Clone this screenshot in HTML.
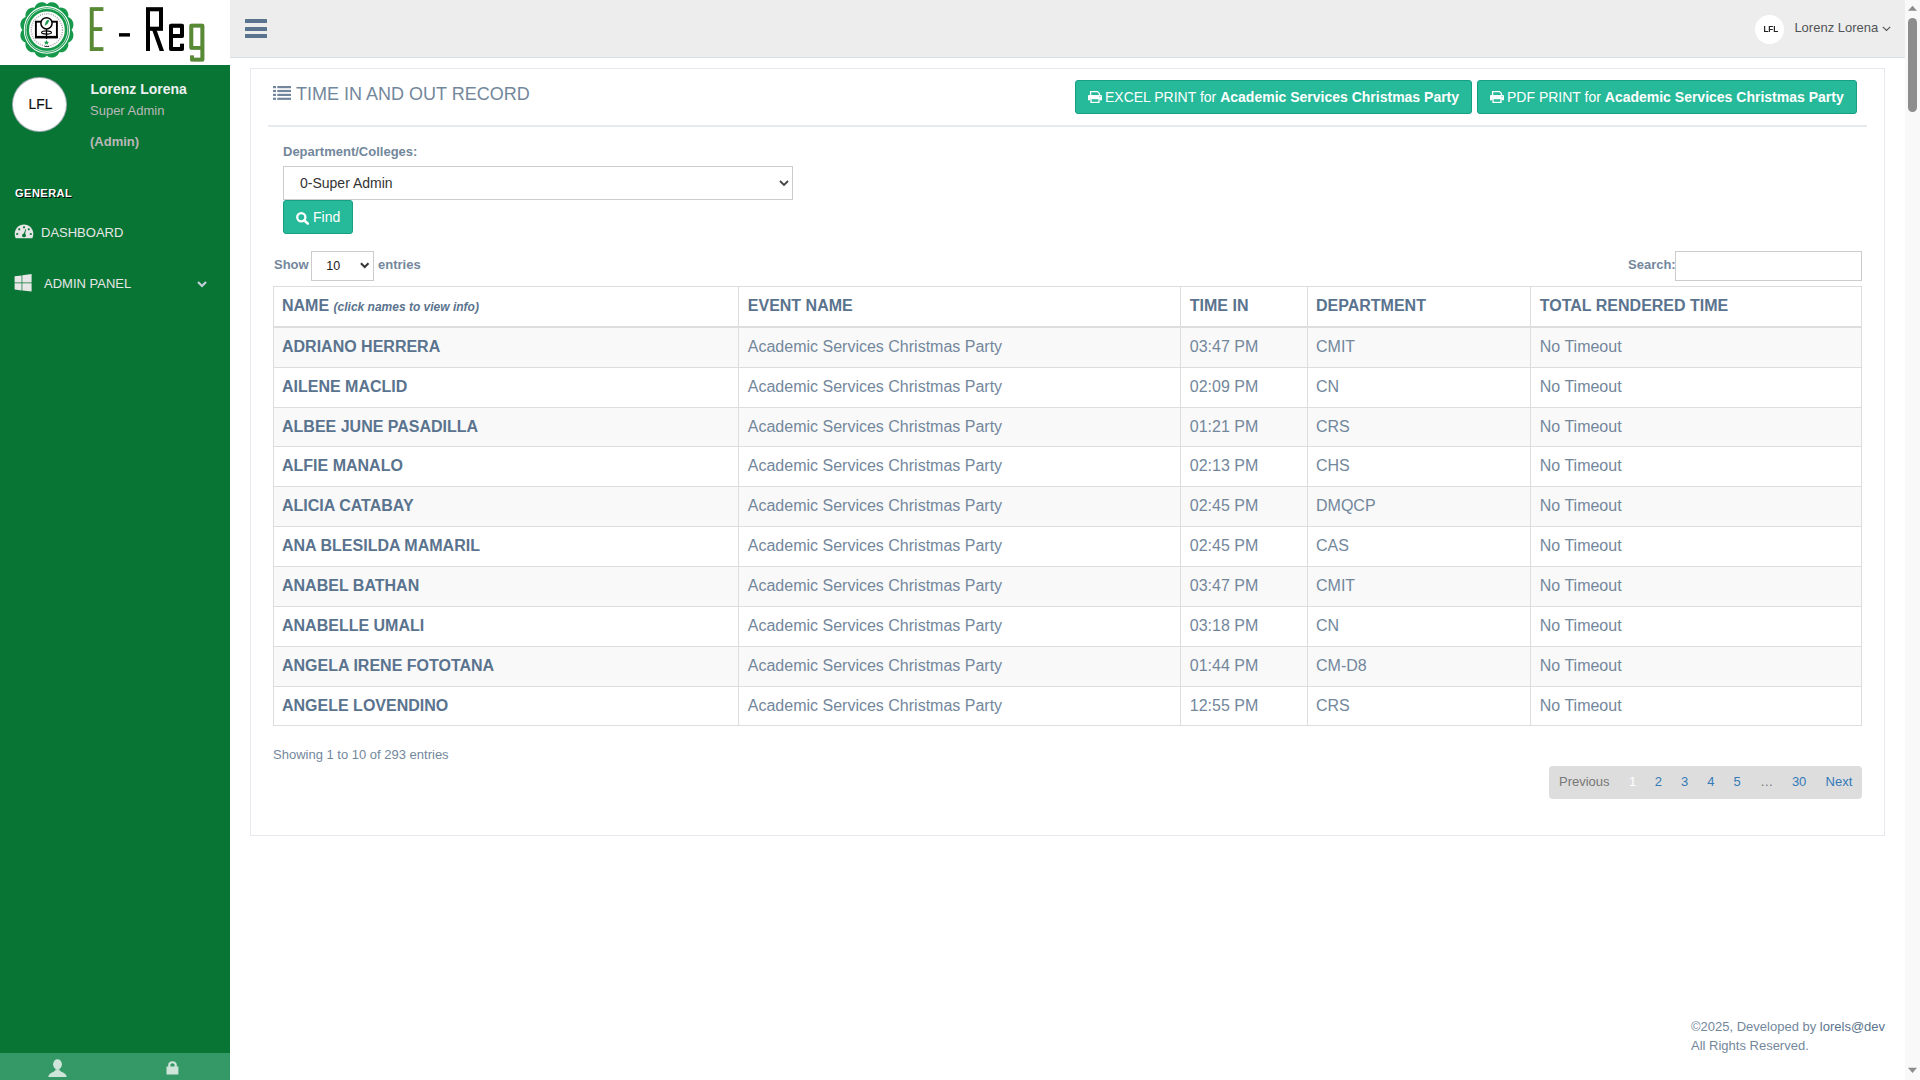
<!DOCTYPE html>
<html>
<head>
<meta charset="utf-8">
<style>
*{box-sizing:border-box;margin:0;padding:0}
html,body{width:1920px;height:1080px;overflow:hidden;background:#fff}
body{font-family:"Liberation Sans",sans-serif;font-size:13px;color:#73879C;line-height:1;position:relative}
.t{position:absolute;white-space:nowrap;line-height:1}
svg{position:absolute;overflow:visible}
/* sidebar */
#side{position:absolute;left:0;top:0;width:230px;height:1080px;background:#087535}
#logo{position:absolute;left:0;top:0;width:230px;height:65px;background:#fff}
#sfoot{position:absolute;left:0;top:1053px;width:230px;height:27px;background:#359967}
/* top nav */
#nav{position:absolute;left:230px;top:0;width:1675px;height:58px;background:#EDEDED;border-bottom:1px solid #D9DEE4}
/* scrollbar */
#sb{position:absolute;left:1905px;top:0;width:15px;height:1080px;background:#F9F9F9}
#thumb{position:absolute;left:1908px;top:18px;width:9px;height:94px;background:#8D8D8D;border-radius:5px}
/* panel */
#panel{position:absolute;left:250px;top:68px;width:1635px;height:768px;border:1px solid #E6E9ED;background:#fff}
#ttl-line{position:absolute;left:268px;top:125px;width:1599px;height:2px;background:#E6E9ED}
.btn{position:absolute;height:34px;background:#26B99A;border:1px solid #169F85;border-radius:3px;color:#fff;font-size:14px;line-height:32px;white-space:nowrap}
.btn b{font-weight:700}
table{position:absolute;left:273px;top:286px;width:1588px;border-collapse:collapse;font-size:16px;line-height:22.857px;table-layout:fixed}
td,th{border:1px solid #ddd;padding:8px;text-align:left;vertical-align:top;white-space:nowrap}
th{font-weight:700;color:#5A738E;border-bottom-width:2px;line-height:22.857px}
tbody tr:nth-child(odd){background:#F9F9F9}
td.n{font-weight:700;color:#5A738E}
td:nth-child(2),th:nth-child(2),td:nth-child(3),th:nth-child(3),td:nth-child(5),th:nth-child(5){padding-left:8.8px}
.sel{position:absolute;background:#fff;border:1px solid #ccc}
.pg{position:absolute;top:774.5px;font-size:13px;color:#337AB7}
</style>
</head>
<body>
<div id="side">
  <div id="logo"></div>
  <div id="sfoot"></div>
</div>

<!-- logo -->
<svg style="left:0;top:0" width="230" height="65" viewBox="0 0 230 65">
  <g transform="translate(46.9,29.9)">
    <path fill="#17994C" d="M0.00,-25.71L1.34,-26.73L2.75,-27.33L4.19,-27.66L5.63,-27.70L7.04,-27.46L8.37,-26.93L9.60,-26.14L10.70,-25.11L11.63,-23.85L12.30,-22.26L13.95,-22.45L15.46,-22.23L16.86,-21.76L18.13,-21.04L19.23,-20.10L20.14,-18.95L20.82,-17.62L21.28,-16.15L21.48,-14.58L21.30,-12.85L22.82,-12.15L24.03,-11.18L25.01,-10.03L25.77,-8.75L26.27,-7.36L26.51,-5.89L26.46,-4.38L26.16,-2.87L25.58,-1.40L24.60,-0.00L25.58,1.40L26.16,2.87L26.46,4.38L26.51,5.89L26.27,7.36L25.77,8.75L25.01,10.03L24.03,11.18L22.82,12.15L21.30,12.85L21.48,14.58L21.28,16.15L20.82,17.62L20.14,18.95L19.23,20.10L18.13,21.04L16.86,21.76L15.46,22.23L13.95,22.45L12.30,22.26L11.63,23.85L10.70,25.11L9.60,26.14L8.37,26.93L7.04,27.46L5.63,27.70L4.19,27.66L2.75,27.33L1.34,26.73L0.00,25.71L-1.34,26.73L-2.75,27.33L-4.19,27.66L-5.63,27.70L-7.04,27.46L-8.37,26.93L-9.60,26.14L-10.70,25.11L-11.63,23.85L-12.30,22.26L-13.95,22.45L-15.46,22.23L-16.86,21.76L-18.13,21.04L-19.23,20.10L-20.14,18.95L-20.82,17.62L-21.28,16.15L-21.48,14.58L-21.30,12.85L-22.82,12.15L-24.03,11.18L-25.01,10.03L-25.77,8.75L-26.27,7.36L-26.51,5.89L-26.46,4.38L-26.16,2.87L-25.58,1.40L-24.60,0.00L-25.58,-1.40L-26.16,-2.87L-26.46,-4.38L-26.51,-5.89L-26.27,-7.36L-25.77,-8.75L-25.01,-10.03L-24.03,-11.18L-22.82,-12.15L-21.30,-12.85L-21.48,-14.58L-21.28,-16.15L-20.82,-17.62L-20.14,-18.95L-19.23,-20.10L-18.13,-21.04L-16.86,-21.76L-15.46,-22.23L-13.95,-22.45L-12.30,-22.26L-11.63,-23.85L-10.70,-25.11L-9.60,-26.14L-8.37,-26.93L-7.04,-27.46L-5.63,-27.70L-4.19,-27.66L-2.75,-27.33L-1.34,-26.73L-0.00,-25.71Z"/>
    <g transform="scale(1,1.03)">
    <circle r="22.6" fill="none" stroke="#fff" stroke-width="1"/>
    <circle r="20.9" fill="none" stroke="#fff" stroke-width="0.7"/>
    <circle r="17.9" fill="#fff"/>
    <circle r="15.6" fill="none" stroke="#555" stroke-width="1.5" stroke-dasharray="0.9 1.3" opacity="0.55"/>
    </g>
    <rect x="-11" y="-8.2" width="21" height="15.8" fill="none" stroke="#000" stroke-width="1.9"/>
    <rect x="-11.9" y="6" width="22.8" height="2" fill="#000"/>
    <circle cx="-0.4" cy="-6.6" r="5.6" fill="#fff" stroke="#000" stroke-width="1.5"/>
    <path d="M-2.2,-4.2 Q-1,-11 2.3,-9.6 Q1.6,-6 -2.2,-4.2Z" fill="#17994C"/>
    <ellipse cx="-0.4" cy="2.6" rx="5" ry="1.6" fill="none" stroke="#000" stroke-width="1.1"/>
    <path d="M-0.4,-1 V9" stroke="#000" stroke-width="1.3"/>
    <path d="M-0.4,10.2 l0.8,1.7 1.8,0.1 -1.4,1.1 0.5,1.8 -1.7,-1 -1.7,1 0.5,-1.8 -1.4,-1.1 1.8,-0.1z" fill="#17994C"/>
    <rect x="-2.3" y="16.1" width="4.6" height="0.9" fill="#333"/>
  </g>
  <g style="filter:drop-shadow(0.8px 0.8px 0.6px rgba(0,0,0,0.35))">
    <path d="M103.3,9.1H91.7V49.2H103.3M91.7,29.1H102.2" fill="none" stroke="#578A32" stroke-width="3.7" stroke-linejoin="miter"/>
    <rect x="119" y="33.2" width="11" height="3.3" fill="#000"/>
    <path d="M148,51V9.3H161V28.8H149" fill="none" stroke="#000" stroke-width="4" stroke-linejoin="miter"/>
    <path d="M151.5,28 L155.8,28 L164,51 L159.7,51Z" fill="#000"/>
    <path d="M171,36.1H182V25.7H171V49H182V43.8" fill="none" stroke="#000" stroke-width="4" stroke-linejoin="round"/>
    <path d="M202.4,47.8H191.3V25.6H202.4V59.7H192V55.4" fill="none" stroke="#578A32" stroke-width="3.8" stroke-linejoin="round"/>
  </g>
</svg>

<!-- profile -->
<div style="position:absolute;left:12px;top:77px;width:55px;height:55px;border-radius:50%;background:#fff;border:1px solid rgba(52,73,94,0.44)"></div>
<div class="t" style="left:28.6px;top:97.6px;font-size:13.8px;color:#111;-webkit-text-stroke:0.2px #111">LFL</div>
<div class="t" style="left:90.4px;top:81.9px;font-size:14px;font-weight:700;color:#ECF0F1">Lorenz Lorena</div>
<div class="t" style="left:90px;top:104.1px;font-size:13px;color:#BAB8B8">Super Admin</div>
<div class="t" style="left:90px;top:134.5px;font-size:13px;font-weight:700;color:#BAB8B8">(Admin)</div>

<!-- menu -->
<div class="t" style="left:15px;top:187.7px;font-size:11px;font-weight:700;color:#fff;letter-spacing:.5px;text-shadow:1px 1px #000">GENERAL</div>
<svg style="left:14px;top:224px" width="20" height="15" viewBox="0 0 20 15">
  <path d="M10,0.5C4.9,0.5 0.7,4.7 0.7,9.9C0.7,11.5 1.1,12.9 1.7,14.3H18.3C18.9,12.9 19.3,11.5 19.3,9.9C19.3,4.7 15.1,0.5 10,0.5Z" fill="#E7E7E7"/>
  <g fill="#087535">
    <circle cx="10" cy="3.3" r="1.1"/><circle cx="5.2" cy="5.3" r="1.1"/><circle cx="14.8" cy="5.3" r="1.1"/>
    <circle cx="3.2" cy="10" r="1.1"/><circle cx="16.8" cy="10" r="1.1"/>
    <circle cx="10" cy="11.4" r="1.9"/>
    <path d="M9.3,11 L11.6,5 L12.2,5.2 L10.7,11.6Z"/>
  </g>
</svg>
<div class="t" style="left:41px;top:226px;font-size:13px;color:#E7E7E7">DASHBOARD</div>
<svg style="left:14px;top:274px" width="18" height="18" viewBox="0 0 18 18">
  <path d="M0.6,2.3 L7.6,1.4 V8.6 H0.6Z M8.3,1.3 L17.6,0 V8.6 H8.3Z M0.6,9.3 H7.6 V16.4 L0.6,15.5Z M8.3,9.3 H17.6 V17.5 L8.3,16.5Z" fill="#E7E7E7"/>
</svg>
<div class="t" style="left:44px;top:276.7px;font-size:13px;color:#E7E7E7">ADMIN PANEL</div>
<svg style="left:197px;top:280.5px" width="10" height="7" viewBox="0 0 10 7">
  <path d="M1,1 L5,5 L9,1" fill="none" stroke="#C4CFDA" stroke-width="2.2"/>
</svg>

<!-- sidebar footer icons -->
<svg style="left:48px;top:1059px" width="19" height="18" viewBox="0 0 19 18">
  <ellipse cx="9.5" cy="5.3" rx="4.4" ry="5.1" fill="#D0E5DA"/>
  <path d="M0.3,18 C0.7,15.2 2.2,14.1 5,12.9 C6.6,12.2 7.4,11.6 7.6,10.2 H11.4 C11.6,11.6 12.4,12.2 14,12.9 C16.8,14.1 18.3,15.2 18.7,18Z" fill="#D0E5DA"/>
</svg>
<svg style="left:166px;top:1061px" width="13" height="15" viewBox="0 0 13 15">
  <path d="M2.2,5.5V3.9C2.2,1.7 4.1,0.3 6.5,0.3C8.9,0.3 10.8,1.7 10.8,3.9V5.5H8.6V4.2C8.6,3 7.7,2.3 6.5,2.3C5.3,2.3 4.4,3 4.4,4.2V5.5Z M0.5,5.5H12.4V13.6H0.5Z" fill="#D0E5DA"/>
</svg>

<!-- top nav -->
<div id="nav"></div>
<svg style="left:245px;top:19px" width="22" height="19" viewBox="0 0 22 19">
  <rect x="0" y="0" width="22" height="4" rx="0.6" fill="#5A738E"/>
  <rect x="0" y="8" width="22" height="4" rx="0.6" fill="#5A738E"/>
  <rect x="0" y="15" width="22" height="4" rx="0.6" fill="#5A738E"/>
</svg>
<div style="position:absolute;left:1755px;top:15px;width:29px;height:29px;border-radius:50%;background:#fff"></div>
<div class="t" style="left:1762.5px;top:25.4px;font-size:8.5px;font-weight:700;color:#222;transform:scaleX(0.95)">LFL</div>
<div class="t" style="left:1794.4px;top:21.1px;font-size:13px;color:#515356">Lorenz Lorena</div>
<svg style="left:1881.5px;top:26px" width="9" height="6" viewBox="0 0 9 6">
  <path d="M0.8,0.8 L4.5,4.5 L8.2,0.8" fill="none" stroke="#515356" stroke-width="1.1"/>
</svg>

<!-- panel -->
<div id="panel"></div>
<svg style="left:273px;top:86px" width="18" height="14" viewBox="0 0 18 14">
  <g fill="#73879C">
    <rect x="0" y="0" width="3" height="2.2"/><rect x="4.3" y="0" width="13.7" height="2.2"/>
    <rect x="0" y="3.9" width="3" height="2.2"/><rect x="4.3" y="3.9" width="13.7" height="2.2"/>
    <rect x="0" y="7.8" width="3" height="2.2"/><rect x="4.3" y="7.8" width="13.7" height="2.2"/>
    <rect x="0" y="11.7" width="3" height="2.2"/><rect x="4.3" y="11.7" width="13.7" height="2.2"/>
  </g>
</svg>
<div class="t" style="left:296px;top:84.8px;font-size:18px;color:#73879C">TIME IN AND OUT RECORD</div>
<div id="ttl-line"></div>

<div class="btn" style="left:1075px;top:80px;width:397px;padding-left:29px">EXCEL PRINT for <b>Academic Services Christmas Party</b></div>
<div class="btn" style="left:1477px;top:80px;width:380px;padding-left:29px">PDF PRINT for <b>Academic Services Christmas Party</b></div>
<svg style="left:1088px;top:91px" width="14" height="12" viewBox="0 0 14 12">
  <path d="M2.6,4.2V0.6H9.6L11.4,2.4V4.2" fill="none" stroke="#fff" stroke-width="1.3"/>
  <path d="M1.2,4H12.8C13.5,4 14,4.5 14,5.2V9.2H11.6V7.2H2.4V9.2H0V5.2C0,4.5 0.5,4 1.2,4Z" fill="#fff"/>
  <path d="M3,7.6H11V11.4H3Z" fill="none" stroke="#fff" stroke-width="1.3"/>
  <circle cx="12" cy="5.6" r="0.6" fill="#26B99A"/>
</svg>
<svg style="left:1490px;top:91px" width="14" height="12" viewBox="0 0 14 12">
  <path d="M2.6,4.2V0.6H9.6L11.4,2.4V4.2" fill="none" stroke="#fff" stroke-width="1.3"/>
  <path d="M1.2,4H12.8C13.5,4 14,4.5 14,5.2V9.2H11.6V7.2H2.4V9.2H0V5.2C0,4.5 0.5,4 1.2,4Z" fill="#fff"/>
  <path d="M3,7.6H11V11.4H3Z" fill="none" stroke="#fff" stroke-width="1.3"/>
  <circle cx="12" cy="5.6" r="0.6" fill="#26B99A"/>
</svg>

<div class="t" style="left:283px;top:145.2px;font-size:13px;font-weight:700;color:#73879C">Department/Colleges:</div>
<div class="sel" style="left:283px;top:166px;width:510px;height:34px"></div>
<div class="t" style="left:300px;top:176.4px;font-size:14px;color:#333">0-Super Admin</div>
<svg style="left:779px;top:180px" width="10" height="7" viewBox="0 0 10 7"><path d="M1,1 L5,5 L9,1" fill="none" stroke="#444" stroke-width="1.8"/></svg>
<div class="btn" style="left:283px;top:200px;width:70px;padding-left:29px;line-height:32px">Find</div>
<svg style="left:295.5px;top:212px" width="14" height="13" viewBox="0 0 14 13">
  <circle cx="5.3" cy="5.3" r="4.1" fill="none" stroke="#fff" stroke-width="2.3"/>
  <path d="M8.2,8.2 L11.8,11.6" stroke="#fff" stroke-width="2.6" stroke-linecap="round"/>
</svg>

<div class="t" style="left:274px;top:257.6px;font-size:13px;font-weight:700;color:#73879C">Show</div>
<div class="sel" style="left:311px;top:251px;width:63px;height:30px;border-color:#ccc"></div>
<div class="t" style="left:326.3px;top:260px;font-size:12.5px;color:#222">10</div>
<svg style="left:360px;top:262px" width="10" height="7" viewBox="0 0 10 7"><path d="M0.9,1.2 L4.7,5 L8.5,1.2" fill="none" stroke="#333" stroke-width="2"/></svg>
<div class="t" style="left:378px;top:257.6px;font-size:13px;font-weight:700;color:#73879C">entries</div>
<div class="t" style="left:1628px;top:257.6px;font-size:13px;font-weight:700;color:#73879C">Search:</div>
<div class="sel" style="left:1675px;top:251px;width:187px;height:30px"></div>

<table>
<colgroup><col style="width:465px"><col style="width:442px"><col style="width:127px"><col style="width:223px"><col style="width:331px"></colgroup>
<thead><tr><th>NAME <i style="font-size:12px;line-height:10px">(click names to view info)</i></th><th>EVENT NAME</th><th>TIME IN</th><th>DEPARTMENT</th><th>TOTAL RENDERED TIME</th></tr></thead>
<tbody>
<tr><td class="n">ADRIANO HERRERA</td><td>Academic Services Christmas Party</td><td>03:47 PM</td><td>CMIT</td><td>No Timeout</td></tr>
<tr><td class="n">AILENE MACLID</td><td>Academic Services Christmas Party</td><td>02:09 PM</td><td>CN</td><td>No Timeout</td></tr>
<tr><td class="n">ALBEE JUNE PASADILLA</td><td>Academic Services Christmas Party</td><td>01:21 PM</td><td>CRS</td><td>No Timeout</td></tr>
<tr><td class="n">ALFIE MANALO</td><td>Academic Services Christmas Party</td><td>02:13 PM</td><td>CHS</td><td>No Timeout</td></tr>
<tr><td class="n">ALICIA CATABAY</td><td>Academic Services Christmas Party</td><td>02:45 PM</td><td>DMQCP</td><td>No Timeout</td></tr>
<tr><td class="n">ANA BLESILDA MAMARIL</td><td>Academic Services Christmas Party</td><td>02:45 PM</td><td>CAS</td><td>No Timeout</td></tr>
<tr><td class="n">ANABEL BATHAN</td><td>Academic Services Christmas Party</td><td>03:47 PM</td><td>CMIT</td><td>No Timeout</td></tr>
<tr><td class="n">ANABELLE UMALI</td><td>Academic Services Christmas Party</td><td>03:18 PM</td><td>CN</td><td>No Timeout</td></tr>
<tr><td class="n">ANGELA IRENE FOTOTANA</td><td>Academic Services Christmas Party</td><td>01:44 PM</td><td>CM-D8</td><td>No Timeout</td></tr>
<tr><td class="n">ANGELE LOVENDINO</td><td>Academic Services Christmas Party</td><td>12:55 PM</td><td>CRS</td><td>No Timeout</td></tr>
</tbody>
</table>

<div class="t" style="left:273px;top:748.3px;font-size:13px;color:#73879C">Showing 1 to 10 of 293 entries</div>

<div style="position:absolute;left:1549px;top:766px;width:313px;height:33px;background:#DDDDDD;border-radius:4px"></div>
<div class="pg" style="left:1559px;color:#777">Previous</div>
<div class="pg" style="left:1629.1px;color:#fff">1</div>
<div class="pg" style="left:1654.8px">2</div>
<div class="pg" style="left:1681.0px">3</div>
<div class="pg" style="left:1707.3px">4</div>
<div class="pg" style="left:1733.5px">5</div>
<div class="pg" style="left:1760.2px;color:#777">…</div>
<div class="pg" style="left:1791.9px">30</div>
<div class="pg" style="left:1825.6px">Next</div>

<div class="t" style="left:1691px;top:1019.9px;font-size:13px;color:#73879C">©2025, Developed by <span style="color:#5A738E">lorels@dev</span></div>
<div class="t" style="left:1691px;top:1038.8px;font-size:13px;color:#73879C">All Rights Reserved.</div>

<div id="sb"></div>
<div id="thumb"></div>
<svg style="left:1905px;top:0" width="15" height="1080" viewBox="0 0 15 1080">
  <path d="M3,10.8 L7.5,5.8 L12,10.8Z" fill="#8D8D8D"/>
  <path d="M3,1067.8 L7.5,1073 L12,1067.8Z" fill="#8D8D8D"/>
</svg>
</body>
</html>
